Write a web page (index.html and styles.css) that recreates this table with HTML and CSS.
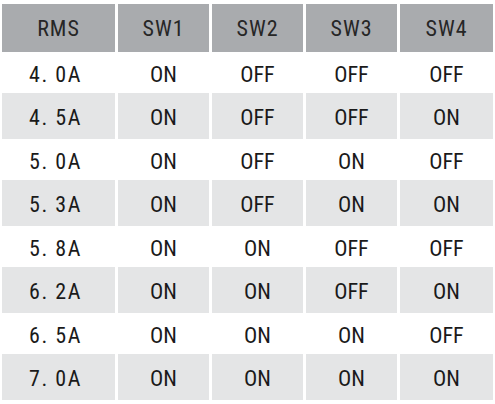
FILE: index.html
```html
<!DOCTYPE html>
<html>
<head>
<meta charset="utf-8">
<link rel="stylesheet" href="styles.css">
</head>
<body>
<div class="table">
  <div class="row head"><div class="cell">RMS</div><div class="cell">SW1</div><div class="cell">SW2</div><div class="cell">SW3</div><div class="cell">SW4</div></div>
  <div class="row odd"><div class="cell rms">4. 0A</div><div class="cell">ON</div><div class="cell">OFF</div><div class="cell">OFF</div><div class="cell">OFF</div></div>
  <div class="row even"><div class="cell rms">4. 5A</div><div class="cell">ON</div><div class="cell">OFF</div><div class="cell">OFF</div><div class="cell">ON</div></div>
  <div class="row odd"><div class="cell rms">5. 0A</div><div class="cell">ON</div><div class="cell">OFF</div><div class="cell">ON</div><div class="cell">OFF</div></div>
  <div class="row even"><div class="cell rms">5. 3A</div><div class="cell">ON</div><div class="cell">OFF</div><div class="cell">ON</div><div class="cell">ON</div></div>
  <div class="row odd"><div class="cell rms">5. 8A</div><div class="cell">ON</div><div class="cell">ON</div><div class="cell">OFF</div><div class="cell">OFF</div></div>
  <div class="row even"><div class="cell rms">6. 2A</div><div class="cell">ON</div><div class="cell">ON</div><div class="cell">OFF</div><div class="cell">ON</div></div>
  <div class="row odd"><div class="cell rms">6. 5A</div><div class="cell">ON</div><div class="cell">ON</div><div class="cell">ON</div><div class="cell">OFF</div></div>
  <div class="row even"><div class="cell rms">7. 0A</div><div class="cell">ON</div><div class="cell">ON</div><div class="cell">ON</div><div class="cell">ON</div></div>
</div>
</body>
</html>
```
FILE: styles.css
```css
html, body {
  margin: 0;
  padding: 0;
  background: #ffffff;
}
.table {
  display: grid;
  grid-template-columns: 113px 91px 91px 91px 93px;
  grid-template-rows: 48px repeat(4, 41px 46px);
  column-gap: 3px;
  padding: 4px 0 0 2px;
  font-family: "Roboto", "Liberation Sans", sans-serif;
  font-stretch: condensed;
  font-weight: 400;
  font-size: 22px;
  color: #1a1a1a;
}
.row {
  display: contents;
}
.cell {
  display: flex;
  align-items: center;
  justify-content: center;
  padding-top: 3px;
  white-space: pre;
}
.rms {
  letter-spacing: 1.5px;
  padding-right: 6px;
}
.head .cell {
  padding-top: 1px;
  letter-spacing: 1px;
  background: #a9abae;
  color: #262626;
}
.even .cell {
  background: #e4e5e6;
}
```
